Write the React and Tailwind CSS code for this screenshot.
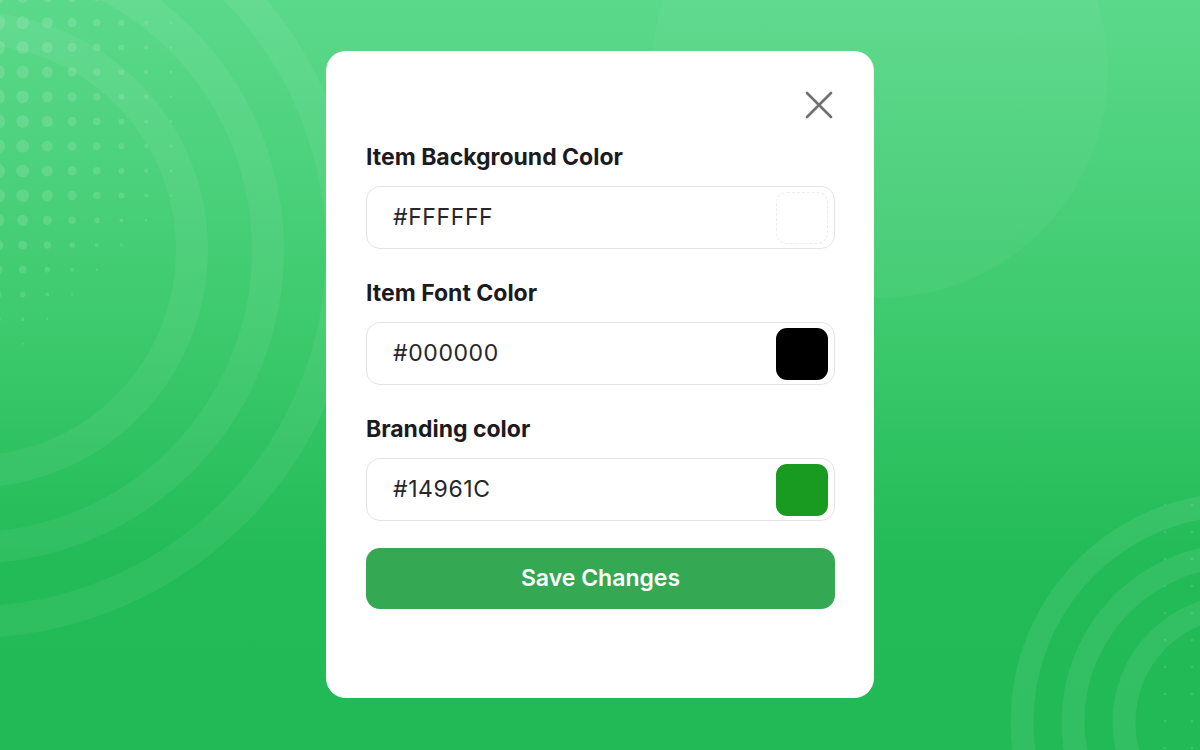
import React from "react";

function Decor() {
  const dots = [];
  for (let c = 0; c < 9; c++) {
    for (let r = 0; r < 15; r++) {
      const x = -2 + c * 24.7;
      const y = -2 + r * 24.7;
      let s = 7.2 - c * 0.85;
      if (r > 8) s -= (r - 8) * 0.9;
      if (r === 0) s *= 0.8;
      if (s < 0.6) continue;
      dots.push(<circle key={c + "-" + r} cx={x} cy={y} r={s} fill="rgba(255,255,255,0.13)" />);
    }
  }
  const brDots = [];
  for (let r = 0; r < 12; r++) {
    for (let c = 0; c < 2; c++) {
      brDots.push(<circle key={"b" + c + r} cx={1165 + c * 27} cy={505 + r * 27} r={1.3} fill="rgba(255,255,255,0.12)" />);
    }
  }
  return (
    <svg className="absolute inset-0" width="1200" height="750" viewBox="0 0 1200 750">
      <defs>
        <linearGradient id="bg" x1="0" y1="0" x2="0" y2="1">
          <stop offset="0" stopColor="#5bd98b" />
          <stop offset="0.45" stopColor="#3cc96c" />
          <stop offset="0.75" stopColor="#22bb57" />
          <stop offset="1" stopColor="#21ba56" />
        </linearGradient>
      </defs>
      <rect width="1200" height="750" fill="url(#bg)" />
      <circle cx="880" cy="70" r="228" fill="rgba(255,255,255,0.04)" />
      <g fill="none" stroke="rgba(255,255,255,0.06)" strokeWidth="32">
        <circle cx="-30" cy="250" r="222" />
        <circle cx="-30" cy="250" r="298" />
        <circle cx="-30" cy="250" r="372" />
      </g>
      {dots}
      <g fill="none" stroke="rgba(255,255,255,0.08)" strokeWidth="23">
        <circle cx="1240" cy="722" r="116" />
        <circle cx="1240" cy="722" r="167" />
        <circle cx="1240" cy="722" r="218" />
      </g>
      {brDots}
    </svg>
  );
}

function Field({ label, value, swatch, white }) {
  return (
    <div className="flex flex-col">
      <div className="text-[23px] font-bold text-[#1b1b1f] leading-[28px] tracking-[0px]">{label}</div>
      <div className="mt-[15px] h-[63px] rounded-[14px] border border-[#e4e4e7] flex items-center justify-between pl-[26px] pr-[6px]">
        <span className="text-[23px] text-[#26262b] tracking-[0.6px]">{value}</span>
        {white ? (
          <div className="w-[52px] h-[52px] rounded-[11px] border border-dashed border-[#ececee]" />
        ) : (
          <div className="w-[52px] h-[52px] rounded-[11px]" style={{ background: swatch }} />
        )}
      </div>
    </div>
  );
}

export default function App() {
  return (
    <div className="relative w-[1200px] h-[750px] overflow-hidden" style={{ fontFamily: "Inter, 'Noto Sans', sans-serif" }}>
      <Decor />
      <div className="relative w-full h-full flex items-center justify-center">
        <div className="w-[548px] h-[647px] -mt-[1px] bg-white rounded-[20px] flex flex-col pl-[40px] pr-[39px] pt-[40px]">
          <div className="flex justify-end pr-[2px]">
            <svg width="28" height="28" viewBox="0 0 28 28">
              <path d="M2 2 L26 26 M26 2 L2 26" stroke="#707070" strokeWidth="2.6" strokeLinecap="round" />
            </svg>
          </div>
          <div className="mt-[24px] flex flex-col gap-[30px]">
            <Field label="Item Background Color" value="#FFFFFF" white />
            <Field label="Item Font Color" value="#000000" swatch="#000000" />
            <Field label="Branding color" value="#14961C" swatch="#199a20" />
          </div>
          <button className="mt-[27px] h-[61px] rounded-[14px] bg-[#34a853] text-white text-[23px] font-semibold tracking-[0px]">
            Save Changes
          </button>
        </div>
      </div>
    </div>
  );
}
